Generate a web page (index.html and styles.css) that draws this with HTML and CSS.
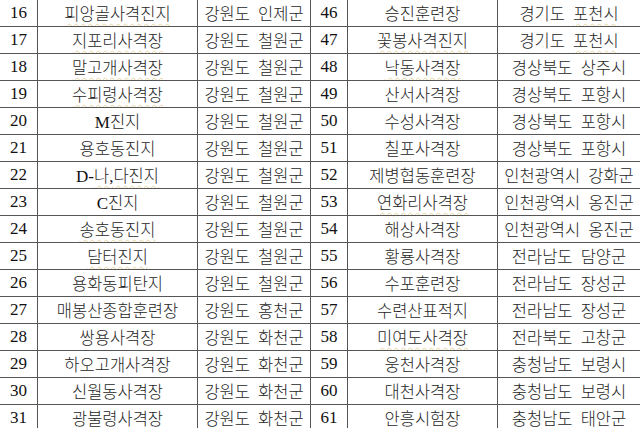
FILE: index.html
```html
<!DOCTYPE html>
<html lang="ko">
<head>
<meta charset="utf-8">
<title>사격장 목록</title>
<link rel="stylesheet" href="styles.css">
</head>
<body>
<div class="sheet">
  <div class="c num">16</div><div class="c name"><span class="sp">피앙골사격진지</span></div><div class="c reg">강원도 인제군</div>
  <div class="c num">46</div><div class="c name">승진훈련장</div><div class="c reg">경기도 <span class="sp">포천시</span></div>

  <div class="c num">17</div><div class="c name"><span class="sp">지포리사격장</span></div><div class="c reg">강원도 철원군</div>
  <div class="c num">47</div><div class="c name"><span class="sp">꽃봉사격진지</span></div><div class="c reg">경기도 <span class="sp">포천시</span></div>

  <div class="c num">18</div><div class="c name"><span class="sp">말고개사격장</span></div><div class="c reg">강원도 철원군</div>
  <div class="c num">48</div><div class="c name"><span class="sp">낙동사격장</span></div><div class="c reg">경상북도 상주시</div>

  <div class="c num">19</div><div class="c name"><span class="sp">수피령사격장</span></div><div class="c reg">강원도 철원군</div>
  <div class="c num">49</div><div class="c name">산서사격장</div><div class="c reg">경상북도 포항시</div>

  <div class="c num">20</div><div class="c name"><span class="lat">M</span>진지</div><div class="c reg">강원도 철원군</div>
  <div class="c num">50</div><div class="c name">수성사격장</div><div class="c reg">경상북도 포항시</div>

  <div class="c num">21</div><div class="c name">용호동진지</div><div class="c reg">강원도 철원군</div>
  <div class="c num">51</div><div class="c name">칠포사격장</div><div class="c reg">경상북도 포항시</div>

  <div class="c num">22</div><div class="c name"><span class="lat">D-</span><span class="sp">나<span class="lat">,</span>다진지</span></div><div class="c reg">강원도 철원군</div>
  <div class="c num">52</div><div class="c name">제병협동훈련장</div><div class="c reg">인천광역시 강화군</div>

  <div class="c num">23</div><div class="c name"><span class="lat">C</span>진지</div><div class="c reg">강원도 철원군</div>
  <div class="c num">53</div><div class="c name"><span class="sp">연화리사격장</span></div><div class="c reg">인천광역시 옹진군</div>

  <div class="c num">24</div><div class="c name"><span class="sp">송호동진지</span></div><div class="c reg">강원도 철원군</div>
  <div class="c num">54</div><div class="c name">해상사격장</div><div class="c reg">인천광역시 옹진군</div>

  <div class="c num">25</div><div class="c name"><span class="sp">담터진지</span></div><div class="c reg">강원도 철원군</div>
  <div class="c num">55</div><div class="c name">황룡사격장</div><div class="c reg">전라남도 담양군</div>

  <div class="c num">26</div><div class="c name">용화동피탄지</div><div class="c reg">강원도 철원군</div>
  <div class="c num">56</div><div class="c name">수포훈련장</div><div class="c reg">전라남도 장성군</div>

  <div class="c num">27</div><div class="c name">매봉산종합훈련장</div><div class="c reg">강원도 홍천군</div>
  <div class="c num">57</div><div class="c name">수련산표적지</div><div class="c reg">전라남도 장성군</div>

  <div class="c num">28</div><div class="c name">쌍용사격장</div><div class="c reg">강원도 화천군</div>
  <div class="c num">58</div><div class="c name"><span class="sp">미여도사격장</span></div><div class="c reg">전라북도 고창군</div>

  <div class="c num">29</div><div class="c name">하오고개사격장</div><div class="c reg">강원도 화천군</div>
  <div class="c num">59</div><div class="c name">웅천사격장</div><div class="c reg">충청남도 보령시</div>

  <div class="c num">30</div><div class="c name">신월동사격장</div><div class="c reg">강원도 화천군</div>
  <div class="c num">60</div><div class="c name">대천사격장</div><div class="c reg">충청남도 보령시</div>

  <div class="c num">31</div><div class="c name"><span class="sp">광불령사격장</span></div><div class="c reg">강원도 화천군</div>
  <div class="c num">61</div><div class="c name"><span class="sp">안흥시험장</span></div><div class="c reg">충청남도 태안군</div>
</div>
</body>
</html>
```

FILE: styles.css
```css
html, body {
  margin: 0;
  padding: 0;
  background: #ffffff;
  overflow: hidden;
}

.sheet {
  display: grid;
  grid-template-columns: 38px 160px 113px 37px 150px 143px;
  grid-auto-rows: 27px;
  width: 641px;
}

.c {
  box-sizing: border-box;
  border-right: 1px solid #555555;
  border-bottom: 1px solid #555555;
  padding-top: 1px;
  text-align: center;
  white-space: nowrap;
  overflow: hidden;
  color: #262626;
  font-family: "Noto Sans CJK KR", "Liberation Serif", sans-serif;
  font-size: 16.5px;
  font-weight: 300;
  line-height: 24px;
}

.num {
  font-family: "Liberation Serif", serif;
  font-size: 17px;
  font-weight: 400;
  color: #111111;
}

.reg {
  word-spacing: 3.5px;
}

.lat {
  font-family: "Liberation Serif", serif;
  font-size: 17px;
  font-weight: 400;
  color: #111111;
}

.sp {
  text-decoration-line: underline;
  text-decoration-style: wavy;
  text-decoration-color: #e6d4a0;
  text-decoration-thickness: 1px;
  text-underline-offset: 3px;
}
```
